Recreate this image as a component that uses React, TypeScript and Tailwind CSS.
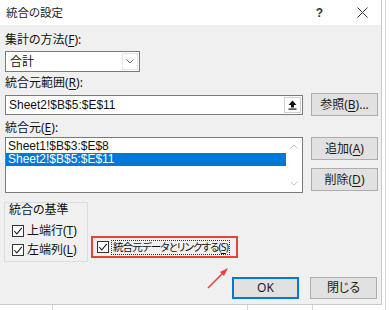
import React from "react";

const U = ({ c }: { c: string }) => (
  <span className="underline underline-offset-[2px] decoration-1">{c}</span>
);

function Check() {
  return (
    <span className="w-[12px] h-[12px] border border-[#333333] bg-white flex items-center justify-center shrink-0">
      <svg width="10" height="10" viewBox="0 0 10 10">
        <path d="M1.2 5 L3.8 7.8 L8.8 1.8" stroke="#222" strokeWidth="1.1" fill="none" />
      </svg>
    </span>
  );
}

function Btn({ children, cls = "" }: { children: React.ReactNode; cls?: string }) {
  return (
    <div
      className={
        "w-[67px] bg-[#e1e1e1] flex items-center justify-center text-[12px] text-[#1a1a1a] " + cls
      }
    >
      {children}
    </div>
  );
}

const latin = "font-['Liberation_Sans',sans-serif]";

export default function App() {
  return (
    <div className="w-[389px] h-[310px] bg-white relative overflow-hidden font-['Noto_Sans','Noto_Sans_CJK_JP',sans-serif] [font-feature-settings:'palt'] text-[12px] text-[#111] leading-[16px]">
      <div className="flex h-[305px]">
        {/* dialog */}
        <div className="w-[382px] h-[305px] border-r border-b border-[#c9c9c9] bg-[#f0f0f0] flex flex-col">
          {/* title bar */}
          <div className="h-[25px] bg-white flex items-center pl-[6px] shrink-0">
            <span className="text-[11.5px] text-[#222]">統合の設定</span>
            <span className="ml-auto text-[12px] font-bold text-[#333] mr-[34px] font-['Liberation_Sans',sans-serif]">?</span>
            <svg width="11" height="11" viewBox="0 0 11 11" className="mr-[13px]">
              <path d="M0.5 0.5 L10.5 10.5 M10.5 0.5 L0.5 10.5" stroke="#333" strokeWidth="1" />
            </svg>
          </div>

          <div className="flex flex-col pl-[5px] pt-[7px]">
            <div className="h-[16px]">
              集計の方法(<U c="F" />):
            </div>
            <div className="mt-[3px] w-[135px] h-[21px] bg-white border border-[#7a7a7a] flex items-center pl-[4px]">
              <span>合計</span>
              <div className="ml-auto mr-[1px] w-[16px] h-[17px] border border-[#e3e3e3] flex items-center justify-center">
                <svg width="8" height="5" viewBox="0 0 8 5">
                  <path d="M0.5 0.5 L4 4 L7.5 0.5" stroke="#777" strokeWidth="1" fill="none" />
                </svg>
              </div>
            </div>

            <div className="mt-[3px] h-[16px]">
              統合元範囲(<U c="R" />):
            </div>
            <div className="mt-[2px] flex items-start">
              <div className="mt-[2px] w-[298px] h-[20px] bg-white border border-[#7a7a7a] flex items-center pl-[3px] pr-[1px]">
                <span className={latin}>Sheet2!$B$5:$E$11</span>
                <div className="ml-auto w-[17px] h-[16px] bg-white border border-[#cfcfcf] flex items-center justify-center">
                  <svg width="9" height="10" viewBox="0 0 9 10">
                    <path d="M4.5 0.5 L8.5 5 L6 5 L6 7.5 L3 7.5 L3 5 L0.5 5 Z" fill="#111" />
                    <rect x="0.5" y="8.5" width="8" height="1.2" fill="#111" />
                  </svg>
                </div>
              </div>
              <Btn cls="ml-[8px] h-[23px] border border-[#adadad]">
                参照(<U c="B" />)...
              </Btn>
            </div>

            <div className="mt-[4px] h-[16px]">
              統合元(<U c="E" />):
            </div>
            <div className="mt-[1px] flex items-start">
              <div className="w-[298px] h-[56px] bg-white border border-[#7a7a7a] flex">
                <div className={"flex-1 flex flex-col pt-[2px] text-[12px] " + latin}>
                  <div className="h-[13px] leading-[13px] pl-[2px]">Sheet1!$B$3:$E$8</div>
                  <div className="h-[13px] leading-[13px] pl-[2px] bg-[#0078d7] text-white">Sheet2!$B$5:$E$11</div>
                </div>
                <div className="w-[16px] flex flex-col items-center justify-between py-[6px]">
                  <svg width="8" height="5" viewBox="0 0 8 5">
                    <path d="M0.5 4.5 L4 1 L7.5 4.5" stroke="#c4c4c4" strokeWidth="1" fill="none" />
                  </svg>
                  <svg width="8" height="5" viewBox="0 0 8 5">
                    <path d="M0.5 0.5 L4 4 L7.5 0.5" stroke="#c4c4c4" strokeWidth="1" fill="none" />
                  </svg>
                </div>
              </div>
              <div className="ml-[8px] flex flex-col">
                <Btn cls="h-[23px] border border-[#adadad]">
                  追加(<U c="A" />)
                </Btn>
                <Btn cls="mt-[8px] h-[23px] border border-[#adadad]">
                  削除(<U c="D" />)
                </Btn>
              </div>
            </div>

            <div className="mt-[9px] flex items-end -ml-[1px]">
              <div className="w-[84px] h-[60px] border border-[#dcdcdc] flex flex-col pl-[4px]">
                <div className="mt-[-1px] h-[16px]">統合の基準</div>
                <div className="mt-[5px] flex items-center gap-[3px] pl-[3px] h-[16px]">
                  <Check />
                  <span>上端行(<U c="T" />)</span>
                </div>
                <div className="mt-[3px] flex items-center gap-[3px] pl-[3px] h-[16px]">
                  <Check />
                  <span>左端列(<U c="L" />)</span>
                </div>
              </div>
              <div className="ml-[3px] mb-[4px] w-[147px] h-[22px] border-2 border-[#e8413c] flex items-center pl-[4px] overflow-hidden">
                <Check />
                <span className="ml-[2px] border border-dotted border-[#333] h-[15px] leading-[13px] px-[1px] whitespace-nowrap text-[10.5px] tracking-[-0.9px]">
                  統合元データとリンクする(<U c="S" />)
                </span>
              </div>
            </div>

            <div className="mt-[15px] flex justify-end pr-[4px]">
              <Btn cls="w-[66px] h-[22px] border-2 border-[#0078d7]">OK</Btn>
              <Btn cls="ml-[11px] w-[66px] h-[22px] border border-[#adadad]">閉じる</Btn>
            </div>
          </div>
        </div>
        <div className="w-[3px]" />
        <div className="w-[1px] h-[310px] bg-[#d4d4d4]" />
      </div>

      {/* spreadsheet grid below dialog */}
      <div className="absolute left-[52px] top-[305px] w-[1px] h-[5px] bg-[#d4d4d4]" />
      <div className="absolute left-[247px] top-[305px] w-[1px] h-[5px] bg-[#d4d4d4]" />
      <div className="absolute left-[312px] top-[305px] w-[1px] h-[5px] bg-[#d4d4d4]" />

      {/* annotation arrow */}
      <svg className="absolute left-[200px] top-[262px]" width="36" height="32" viewBox="0 0 36 32">
        <path d="M8 26 L25 9" stroke="#e8413c" strokeWidth="1.6" />
        <path d="M28 6 L20 10 L24 14 Z" fill="#e8413c" />
      </svg>
    </div>
  );
}
